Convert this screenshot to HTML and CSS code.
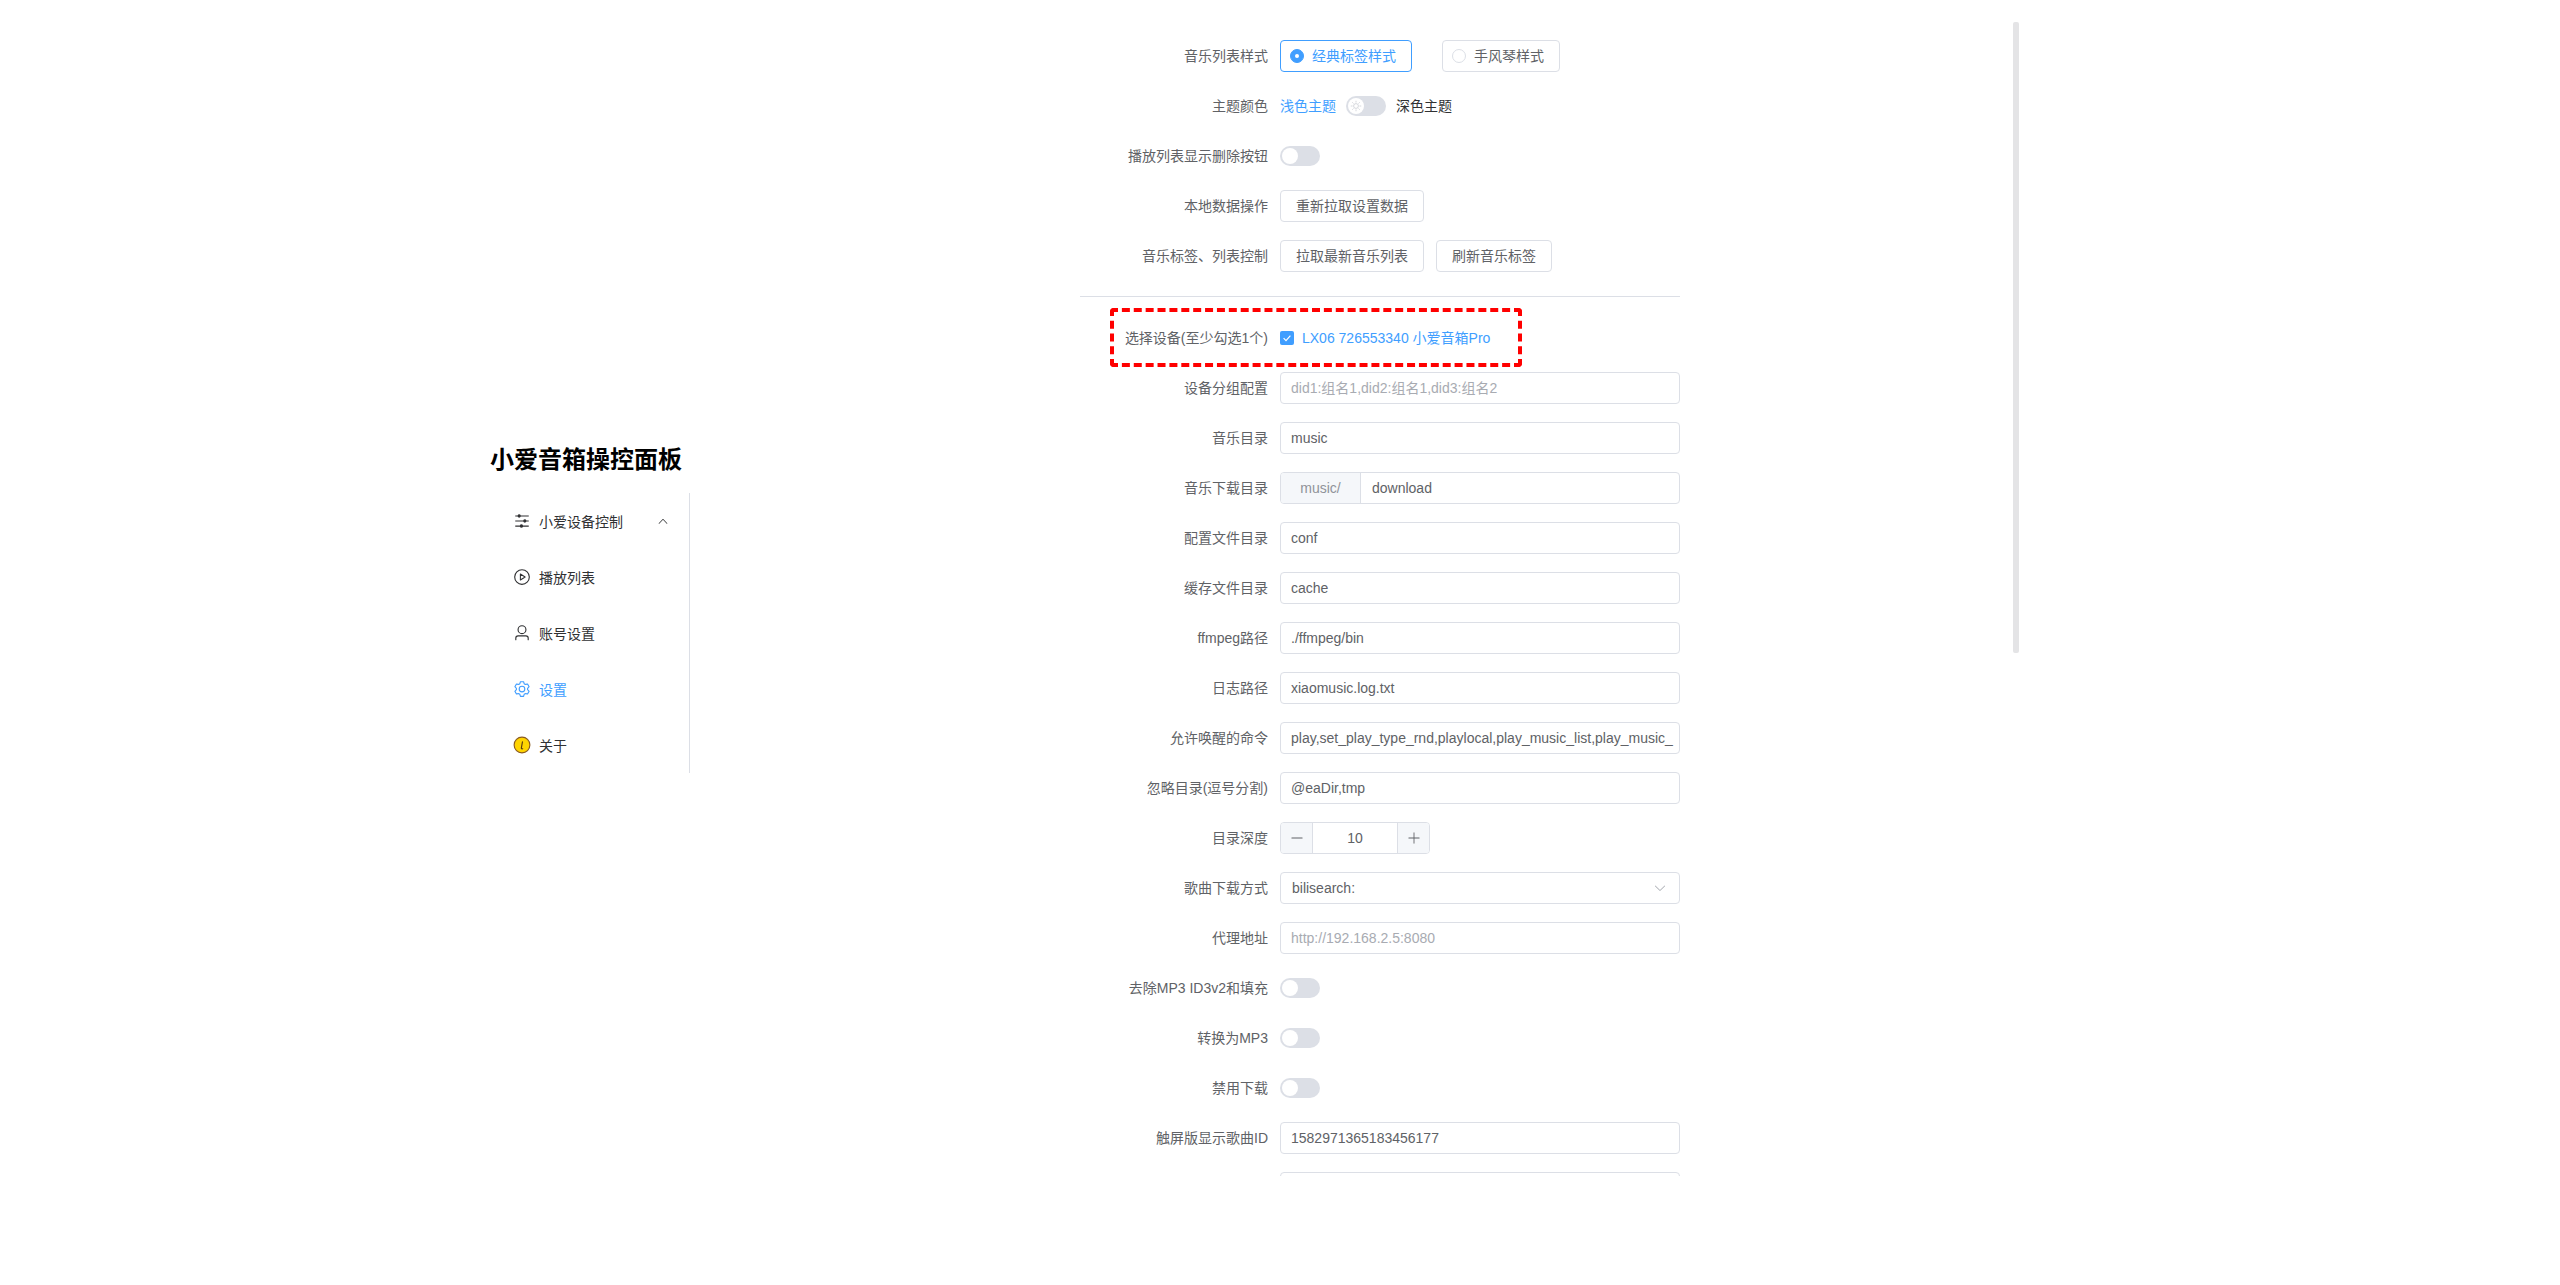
FILE: index.html
```html
<!DOCTYPE html>
<html lang="zh">
<head>
<meta charset="utf-8">
<title>小爱音箱操控面板</title>
<link rel="stylesheet" href="styles.css">
</head>
<body>
<div class="app">
  <aside class="side">
    <h2 class="brand">小爱音箱操控面板</h2>
    <nav class="menu">
      <div class="menu-item">
        <span class="menu-icon"><svg viewBox="0 0 1024 1024"><path fill="currentColor" d="M389.44 768a96.064 96.064 0 0 1 181.12 0H896v64H570.56a96.064 96.064 0 0 1-181.12 0H128v-64h261.44zm192-288a96.064 96.064 0 0 1 181.12 0H896v64H762.56a96.064 96.064 0 0 1-181.12 0H128v-64h453.44zm-320-288a96.064 96.064 0 0 1 181.12 0H896v64H442.56a96.064 96.064 0 0 1-181.12 0H128v-64h133.44z"/></svg></span>
        <span>小爱设备控制</span>
        <svg class="chevron" viewBox="0 0 1024 1024"><path fill="currentColor" d="M488.832 344.32l-339.84 356.672a32 32 0 0 0 0 44.16l.384.384a29.44 29.44 0 0 0 42.688 0l320-335.872 319.872 335.872a29.44 29.44 0 0 0 42.688 0l.384-.384a32 32 0 0 0 0-44.16L535.168 344.32a32 32 0 0 0-46.336 0z"/></svg>
      </div>
      <div class="menu-item">
        <span class="menu-icon"><svg viewBox="0 0 1024 1024"><path fill="currentColor" d="M512 896a384 384 0 1 0 0-768 384 384 0 0 0 0 768zm0 64a448 448 0 1 1 0-896 448 448 0 0 1 0 896z"/><path fill="none" stroke="currentColor" stroke-width="60" stroke-linejoin="round" d="M420 340v344l270-172z"/></svg></span>
        <span>播放列表</span>
      </div>
      <div class="menu-item">
        <span class="menu-icon"><svg viewBox="0 0 1024 1024"><path fill="currentColor" d="M512 512a192 192 0 1 0 0-384 192 192 0 0 0 0 384zm0 64a256 256 0 1 1 0-512 256 256 0 0 1 0 512zm320 320v-96a96 96 0 0 0-96-96H288a96 96 0 0 0-96 96v96a32 32 0 1 1-64 0v-96a160 160 0 0 1 160-160h448a160 160 0 0 1 160 160v96a32 32 0 1 1-64 0z"/></svg></span>
        <span>账号设置</span>
      </div>
      <div class="menu-item is-active">
        <span class="menu-icon"><svg viewBox="0 0 1024 1024"><path fill="currentColor" d="M600.704 64a32 32 0 0 1 30.464 22.208l35.2 109.376c14.784 7.232 28.928 15.36 42.432 24.512l112.384-24.192a32 32 0 0 1 34.432 15.36L944.32 364.8a32 32 0 0 1-4.032 37.504l-77.12 85.12a357.12 357.12 0 0 1 0 49.024l77.12 85.248a32 32 0 0 1 4.032 37.504l-88.704 153.6a32 32 0 0 1-34.432 15.296L708.8 803.904c-13.44 9.088-27.648 17.28-42.368 24.512l-35.264 109.376A32 32 0 0 1 600.704 960H423.296a32 32 0 0 1-30.464-22.208L357.696 828.48a351.616 351.616 0 0 1-42.56-24.64l-112.32 24.256a32 32 0 0 1-34.432-15.36L79.68 659.2a32 32 0 0 1 4.032-37.504l77.12-85.248a357.12 357.12 0 0 1 0-48.896l-77.12-85.248A32 32 0 0 1 79.68 364.8l88.704-153.6a32 32 0 0 1 34.432-15.296l112.32 24.256c13.568-9.152 27.776-17.408 42.56-24.64l35.2-109.312A32 32 0 0 1 423.232 64H600.64zm-23.424 64H446.72l-36.352 113.088-24.512 11.968a294.113 294.113 0 0 0-34.816 20.096l-22.656 15.36-116.224-25.088-65.28 113.152 79.68 88.192-1.92 27.136a293.12 293.12 0 0 0 0 40.192l1.92 27.136-79.808 88.192 65.344 113.152 116.224-25.024 22.656 15.296a294.113 294.113 0 0 0 34.816 20.096l24.512 11.968L446.72 896h130.688l36.48-113.152 24.448-11.904a288.282 288.282 0 0 0 34.752-20.096l22.592-15.296 116.288 25.024 65.28-113.152-79.744-88.192 1.92-27.136a293.12 293.12 0 0 0 0-40.256l-1.92-27.136 79.808-88.128-65.344-113.152-116.288 24.96-22.592-15.232a287.616 287.616 0 0 0-34.752-20.096l-24.448-11.904L577.344 128zM512 320a192 192 0 1 1 0 384 192 192 0 0 1 0-384zm0 64a128 128 0 1 0 0 256 128 128 0 0 0 0-256z"/></svg></span>
        <span>设置</span>
      </div>
      <div class="menu-item">
        <span class="menu-icon"><svg viewBox="0 0 16 16"><circle cx="8" cy="8" r="7" fill="#ffd400" stroke="#8a5a1e" stroke-width="1"/><path fill="none" stroke="#5a3a10" stroke-width="1" stroke-linecap="round" d="M8.4 5.2 7.4 10.8c-.1.6.5.7 1.2.5"/></svg></span>
        <span>关于</span>
      </div>
    </nav>
  </aside>

  <main class="main">
    <form class="form">
      <div class="row">
        <label class="label">音乐列表样式</label>
        <div class="control">
          <span class="radio is-checked"><i class="radio-dot"></i>经典标签样式</span>
          <span class="radio"><i class="radio-dot"></i>手风琴样式</span>
        </div>
      </div>
      <div class="row">
        <label class="label">主题颜色</label>
        <div class="control">
          <span class="switch-text is-on">浅色主题</span>
          <span class="switch">
            <span class="knob"><svg class="sun" viewBox="0 0 16 16"><circle cx="8" cy="8" r="3.2" fill="none" stroke="currentColor"/><path stroke="currentColor" d="M8 1v2.4M8 12.6V15M1 8h2.4M12.6 8H15M3 3l1.7 1.7M11.3 11.3 13 13M3 13l1.7-1.7M11.3 4.7 13 3"/></svg></span>
          </span>
          <span class="switch-text">深色主题</span>
        </div>
      </div>
      <div class="row">
        <label class="label">播放列表显示删除按钮</label>
        <div class="control"><span class="switch is-plain"><span class="knob"></span></span></div>
      </div>
      <div class="row">
        <label class="label">本地数据操作</label>
        <div class="control"><span class="btn">重新拉取设置数据</span></div>
      </div>
      <div class="row">
        <label class="label">音乐标签、列表控制</label>
        <div class="control btn-group">
          <span class="btn">拉取最新音乐列表</span>
          <span class="btn">刷新音乐标签</span>
        </div>
      </div>

      <hr class="divider">

      <div class="row">
        <label class="label">选择设备(至少勾选1个)</label>
        <div class="control">
          <span class="checkbox"><svg viewBox="0 0 14 14"><path fill="none" stroke="#fff" stroke-width="1.2" d="M3.6 7.2 6 9.6l4.4-5"/></svg></span>
          <span class="device">LX06 726553340 小爱音箱Pro</span>
        </div>
        <div class="callout"></div>
      </div>
      <div class="row">
        <label class="label">设备分组配置</label>
        <div class="control"><div class="input is-empty">did1:组名1,did2:组名1,did3:组名2</div></div>
      </div>
      <div class="row">
        <label class="label">音乐目录</label>
        <div class="control"><div class="input">music</div></div>
      </div>
      <div class="row">
        <label class="label">音乐下载目录</label>
        <div class="control">
          <div class="input-group">
            <span class="prepend">music/</span>
            <span class="group-input">download</span>
          </div>
        </div>
      </div>
      <div class="row">
        <label class="label">配置文件目录</label>
        <div class="control"><div class="input">conf</div></div>
      </div>
      <div class="row">
        <label class="label">缓存文件目录</label>
        <div class="control"><div class="input">cache</div></div>
      </div>
      <div class="row">
        <label class="label">ffmpeg路径</label>
        <div class="control"><div class="input">./ffmpeg/bin</div></div>
      </div>
      <div class="row">
        <label class="label">日志路径</label>
        <div class="control"><div class="input">xiaomusic.log.txt</div></div>
      </div>
      <div class="row">
        <label class="label">允许唤醒的命令</label>
        <div class="control"><div class="input">play,set_play_type_rnd,playlocal,play_music_list,play_music_</div></div>
      </div>
      <div class="row">
        <label class="label">忽略目录(逗号分割)</label>
        <div class="control"><div class="input">@eaDir,tmp</div></div>
      </div>
      <div class="row">
        <label class="label">目录深度</label>
        <div class="control">
          <div class="number">
            <span class="step is-minus"><svg viewBox="0 0 1024 1024"><path fill="currentColor" d="M128 544h768a32 32 0 1 0 0-64H128a32 32 0 0 0 0 64z"/></svg></span>
            <span class="number-value">10</span>
            <span class="step is-plus"><svg viewBox="0 0 1024 1024"><path fill="currentColor" d="M480 480V128a32 32 0 0 1 64 0v352h352a32 32 0 1 1 0 64H544v352a32 32 0 1 1-64 0V544H128a32 32 0 0 1 0-64h352z"/></svg></span>
          </div>
        </div>
      </div>
      <div class="row">
        <label class="label">歌曲下载方式</label>
        <div class="control">
          <div class="select"><span>bilisearch:</span>
            <svg class="select-arrow" viewBox="0 0 1024 1024"><path fill="currentColor" d="M831.872 340.864 512 652.672 192.128 340.864a30.592 30.592 0 0 0-42.752 0 29.12 29.12 0 0 0 0 41.6L489.664 714.24a32 32 0 0 0 44.672 0l340.288-331.712a29.12 29.12 0 0 0 0-41.728 30.592 30.592 0 0 0-42.752 0z"/></svg>
          </div>
        </div>
      </div>
      <div class="row">
        <label class="label">代理地址</label>
        <div class="control"><div class="input is-empty">http://192.168.2.5:8080</div></div>
      </div>
      <div class="row">
        <label class="label">去除MP3 ID3v2和填充</label>
        <div class="control"><span class="switch is-plain"><span class="knob"></span></span></div>
      </div>
      <div class="row">
        <label class="label">转换为MP3</label>
        <div class="control"><span class="switch is-plain"><span class="knob"></span></span></div>
      </div>
      <div class="row">
        <label class="label">禁用下载</label>
        <div class="control"><span class="switch is-plain"><span class="knob"></span></span></div>
      </div>
      <div class="row">
        <label class="label">触屏版显示歌曲ID</label>
        <div class="control"><div class="input">1582971365183456177</div></div>
      </div>
      <div class="row">
        <div class="label"></div>
        <div class="control"><div class="input"></div></div>
      </div>
    </form>
    <div class="scroll-thumb"></div>
  </main>
</div>
</body>
</html>
```
FILE: styles.css
```css
* { box-sizing: border-box; }
html, body { margin: 0; padding: 0; background: #fff; }
body {
  font-family: "Liberation Sans", "Noto Sans CJK SC", sans-serif;
  font-size: 14px;
  color: #606266;
  overflow: hidden;
}
.app { display: flex; height: 1285px; padding-left: 490px; }

/* sidebar */
.side { width: 200px; flex: none; padding-top: 444px; }
.brand { margin: 0 0 17px; font-size: 24px; line-height: 32px; font-weight: 700; color: #000; }
.menu { border-right: 1px solid #dcdfe6; }
.menu-item {
  display: flex; align-items: center;
  height: 56px; padding-left: 20px;
  color: #303133;
}
.menu-item.is-active { color: #409eff; }
.menu-icon { width: 24px; margin-right: 5px; display: flex; justify-content: center; flex: none; }
.menu-icon svg { width: 18px; height: 18px; display: block; }
.chevron { width: 12px; height: 12px; margin-left: 34px; }

/* main */
.main { position: relative; width: 1330px; height: 1176px; overflow: hidden; flex: none; }
.form { width: 600px; margin-left: 390px; padding-top: 40px; }
.row { position: relative; display: flex; height: 32px; margin-bottom: 18px; line-height: 32px; }
.label { width: 200px; padding-right: 12px; text-align: right; flex: none; white-space: nowrap; }
.control { flex: 1; min-width: 0; display: flex; align-items: center; }
.divider { height: 1px; border: 0; background: #dcdfe6; margin: 24px 0 25px; }
.scroll-thumb {
  position: absolute; left: 1323px; top: 22px;
  width: 6px; height: 631px; background: #e4e4e6; border-radius: 2px;
}
.callout {
  position: absolute; left: 30px; top: -14px;
  width: 412px; height: 59px;
  border: 4px dashed #f00; border-radius: 4px;
}

/* radios */
.radio {
  display: inline-flex; align-items: center;
  height: 32px; padding: 0 15px 0 9px; margin-right: 30px;
  border: 1px solid #dcdfe6; border-radius: 4px;
}
.radio-dot {
  width: 14px; height: 14px; margin-right: 8px;
  border: 1px solid #dcdfe6; border-radius: 50%; background: #fff;
  display: block; flex: none;
}
.radio.is-checked { border-color: #409eff; color: #409eff; }
.radio.is-checked .radio-dot { background: #409eff; border-color: #409eff; position: relative; }
.radio.is-checked .radio-dot::after {
  content: ""; position: absolute; left: 4px; top: 4px;
  width: 4px; height: 4px; border-radius: 50%; background: #fff;
}

/* switches */
.switch {
  position: relative; display: inline-block;
  width: 40px; height: 20px; flex: none;
  border-radius: 10px; background: #dcdfe6;
}
.knob {
  position: absolute; left: 2px; top: 2px;
  width: 16px; height: 16px; border-radius: 50%; background: #fff;
  display: flex; align-items: center; justify-content: center; color: #c8cbd2;
}
.sun { width: 12px; height: 12px; }
.switch-text { color: #303133; }
.switch-text.is-on { color: #409eff; }
.control .switch + .switch-text { margin-left: 10px; }
.control .switch-text + .switch { margin-left: 10px; }

/* buttons */
.btn {
  display: inline-flex; align-items: center; justify-content: center;
  height: 32px; padding: 0 15px;
  border: 1px solid #dcdfe6; border-radius: 4px; background: #fff; color: #606266;
}
.btn-group { gap: 12px; }

/* checkbox */
.checkbox { width: 14px; height: 14px; margin-right: 8px; background: #409eff; border-radius: 2px; flex: none; }
.checkbox svg { display: block; width: 14px; height: 14px; }
.device { color: #409eff; }

/* inputs */
.input, .select, .input-group {
  width: 100%; height: 32px;
  border: 1px solid #dcdfe6; border-radius: 4px; background: #fff;
  line-height: 30px; color: #606266;
}
.input { padding: 0 10px; white-space: nowrap; overflow: hidden; }
.input.is-empty { color: #a8abb2; }
.input-group { display: flex; overflow: hidden; }
.prepend { width: 80px; flex: none; text-align: center; color: #909399; background: #f5f7fa; border-right: 1px solid #dcdfe6; }
.group-input { padding: 0 11px; flex: 1; }
.select { display: flex; align-items: center; justify-content: space-between; padding: 0 12px 0 11px; }
.select-arrow { width: 14px; height: 14px; color: #a8abb2; }

/* number */
.number {
  display: flex; width: 150px; height: 32px;
  border: 1px solid #dcdfe6; border-radius: 4px; overflow: hidden; line-height: 30px;
}
.step { width: 32px; flex: none; display: flex; align-items: center; justify-content: center; background: #f5f7fa; color: #606266; }
.step svg { width: 14px; height: 14px; }
.step.is-minus { border-right: 1px solid #dcdfe6; }
.step.is-plus { border-left: 1px solid #dcdfe6; }
.number-value { flex: 1; text-align: center; }
```
